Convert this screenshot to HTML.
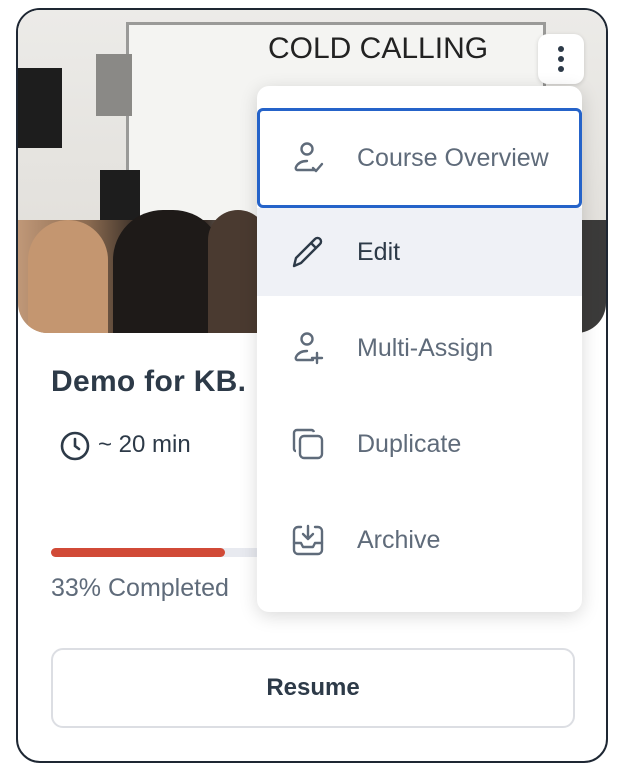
<!DOCTYPE html>
<html><head><style>
*{margin:0;padding:0;box-sizing:border-box}
body{width:622px;height:774px;background:#fff;font-family:"Liberation Sans",sans-serif;position:relative;overflow:hidden}
.card{position:absolute;left:16px;top:8px;width:592px;height:755px;border:2px solid #1e2733;border-radius:24px;overflow:hidden;background:#fff}
.img{position:absolute;left:0;top:0;width:588px;height:323px;border-radius:0 0 30px 30px;overflow:hidden;background:#e6e3de}
.abs{position:absolute}
.menu{position:absolute;left:257px;top:86px;width:325px;height:526px;background:#fff;border-radius:12px;box-shadow:0 4px 18px rgba(0,0,0,.15)}
.item{position:absolute;left:0;width:325px;height:96px;display:flex;align-items:center;font-size:25px;color:#5f6b7a}
.item svg{position:absolute;left:34px}
.item span{position:absolute;left:100px}
</style></head><body>
<div class="card">
 <div class="img">
  <div class="abs" style="left:0;top:0;width:588px;height:325px;background:linear-gradient(#ecebe8,#dedbd6)"></div>
  <div class="abs" style="left:108px;top:12px;width:420px;height:210px;background:#f4f4f2;border:3px solid #9a9a98"></div>
  <div class="abs" style="left:250px;top:22px;font-size:30px;color:#222">COLD CALLING</div>
  <div class="abs" style="left:0;top:58px;width:44px;height:80px;background:#1d1d1d"></div>
  <div class="abs" style="left:78px;top:44px;width:36px;height:62px;background:#8a8986"></div>
  <div class="abs" style="left:82px;top:160px;width:40px;height:60px;background:#1d1d1d"></div>
  <div class="abs" style="left:0;top:210px;width:588px;height:115px;background:linear-gradient(90deg,#c09878 0%,#8a6a50 12%,#2a2420 22%,#3a302a 32%,#b0a49a 40%,#5a4a40 55%,#3a3a3a 100%)"></div>
  <div class="abs" style="left:95px;top:200px;width:110px;height:125px;border-radius:50px 50px 0 0;background:#1e1a18"></div>
  <div class="abs" style="left:10px;top:210px;width:80px;height:115px;border-radius:40px 40px 0 0;background:#c49670"></div>
  <div class="abs" style="left:190px;top:200px;width:60px;height:125px;border-radius:30px 30px 0 0;background:#4a3a30"></div>
 </div>
 <div class="abs" style="left:520px;top:24px;width:46px;height:50px;background:#fff;border-radius:10px;box-shadow:0 1px 4px rgba(0,0,0,.15)">
  <div class="abs" style="left:20px;top:12px;width:6px;height:6px;border-radius:3px;background:#2d3a48"></div>
  <div class="abs" style="left:20px;top:22px;width:6px;height:6px;border-radius:3px;background:#2d3a48"></div>
  <div class="abs" style="left:20px;top:32px;width:6px;height:6px;border-radius:3px;background:#2d3a48"></div>
 </div>
 <div class="abs" style="left:33px;top:355px;font-size:30px;font-weight:bold;color:#2d3a48;letter-spacing:0.3px">Demo for KB.</div>
 <div class="abs" style="left:41px;top:420px">
  <svg width="32" height="32" viewBox="0 0 32 32" fill="none" stroke="#2d3a48" stroke-width="2.6" stroke-linecap="round"><circle cx="16" cy="16" r="13"/><path d="M16 9v7l4 3"/></svg>
 </div>
 <div class="abs" style="left:80px;top:421px;font-size:24px;color:#2d3a48">~ 20 min</div>
 <div class="abs" style="left:33px;top:538px;width:260px;height:9px;background:#e8eaf0;border-radius:5px"></div>
 <div class="abs" style="left:33px;top:538px;width:174px;height:9px;background:#d14a37;border-radius:5px"></div>
 <div class="abs" style="left:33px;top:564px;font-size:25px;color:#5f6b7a">33% Completed</div>
 <div class="abs" style="left:33px;top:638px;width:524px;height:80px;border:2px solid #dcdee3;border-radius:12px;display:flex;align-items:center;justify-content:center;font-size:24px;font-weight:bold;color:#2d3a48">Resume</div>
</div>
<div class="menu">
 <div class="item" style="top:22px;height:100px;border:3px solid #2563c9;border-radius:6px">
  <svg width="34" height="34" viewBox="0 0 34 34" fill="none" stroke="#5f6b7a" stroke-width="2.4" stroke-linecap="round" stroke-linejoin="round" style="left:31px"><circle cx="16" cy="8" r="5.5"/><path d="M24 29H6a2 2 0 0 1-1-3c2-4 6-6 11-6"/><path d="M22 27l3 3 6-7"/></svg>
  <span style="left:97px">Course Overview</span>
 </div>
 <div class="item" style="top:122px;height:88px;background:#eff1f6;color:#2d3a48">
  <svg width="34" height="34" viewBox="0 0 34 34" fill="none" stroke="#2d3a48" stroke-width="2.4" stroke-linejoin="round"><path d="M3 31l2-8L24 4a3 3 0 0 1 5 5L10 28z M20 8l5 5"/></svg>
  <span>Edit</span>
 </div>
 <div class="item" style="top:214px">
  <svg width="34" height="34" viewBox="0 0 34 34" fill="none" stroke="#5f6b7a" stroke-width="2.4" stroke-linecap="round"><circle cx="16" cy="8" r="5.5"/><path d="M22 29H6a2 2 0 0 1-1-3c2-4 6-6 11-6"/><path d="M26 22v10M21 27h10"/></svg>
  <span>Multi-Assign</span>
 </div>
 <div class="item" style="top:310px">
  <svg width="34" height="34" viewBox="0 0 34 34" fill="none" stroke="#5f6b7a" stroke-width="2.4" stroke-linejoin="round"><rect x="9" y="9" width="22" height="22" rx="4"/><path d="M5 24a2 2 0 0 1-2-2V6a3 3 0 0 1 3-3h14a3 3 0 0 1 3 2"/></svg>
  <span>Duplicate</span>
 </div>
 <div class="item" style="top:406px">
  <svg width="34" height="34" viewBox="0 0 34 34" fill="none" stroke="#5f6b7a" stroke-width="2.4" stroke-linecap="round" stroke-linejoin="round"><path d="M10 4H7a4 4 0 0 0-4 4v19a4 4 0 0 0 4 4h20a4 4 0 0 0 4-4V8a4 4 0 0 0-4-4h-3"/><path d="M3 20h7l2 4h10l2-4h7"/><path d="M17 3v12M12 11l5 5 5-5"/></svg>
  <span>Archive</span>
 </div>
</div>
</body></html>
